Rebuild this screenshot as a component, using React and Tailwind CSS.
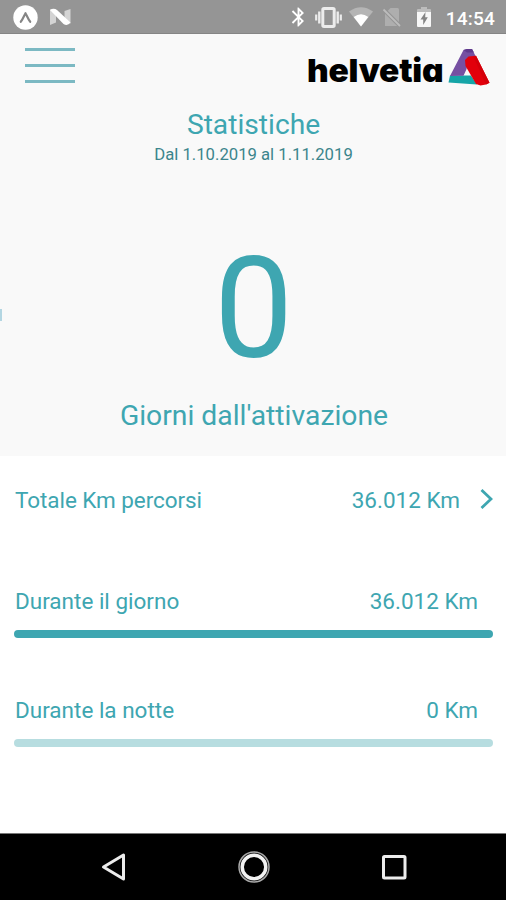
import { MdBluetooth } from 'react-icons/md';

// Rows under the counter. `value` is the distance, `progress` the filled share of the bar.
const TRIPS = [
  { label: 'Durante il giorno', value: '36.012 Km', progress: 100 },
  { label: 'Durante la notte', value: '0 Km', progress: 0 },
];

function StatusBar() {
  return (
    <div className="flex h-[34px] shrink-0 items-center justify-between border-b border-[#858585] bg-[#959595] pr-[11px] pl-[13px] text-white">
      <div className="flex items-center gap-3">
        <svg width="25" height="25" viewBox="0 0 25 25" className="mt-px">
          <circle cx="12.5" cy="12.5" r="12.2" fill="#fff" />
          <path d="M7.8 16.8 C9.6 14.6 11 11.2 12.5 8.2 C14 11.2 15.4 14.6 17.2 16.8" fill="none" stroke="#858585" strokeWidth="2.2" strokeLinejoin="round" strokeLinecap="round" />
        </svg>
        <svg width="21" height="18" viewBox="0 0 21 18">
          <path d="M0 1.500 H6 V14.500 L0 17 Z" fill="#d4d4d4" />
          <path d="M20.500 1 L14.500 3 V15 L20.500 15.500 Z" fill="#d4d4d4" />
          <path d="M0 2 Q3.500 -.5 7 2 L20.500 14.500 Q17.500 18.500 13.500 16 Z" fill="#fff" />
        </svg>
      </div>
      <div className="flex items-center">
        <MdBluetooth className="mt-px h-[24px] w-[23px]" />
        <svg width="27" height="21" viewBox="0 0 27 21" fill="none" stroke="#ececec" className="mt-px ml-[5px]">
          <rect x="7.800" y="1.500" width="11.400" height="18" rx="1.200" strokeWidth="3" />
          <path d="M4.300 4.500 V16.500 M22.700 4.500 V16.500" strokeWidth="2.400" />
          <path d="M1.200 7.500 V13.500 M25.800 7.500 V13.500" strokeWidth="2.200" />
        </svg>
        <svg width="24" height="20" viewBox="0 0 24 20" className="mt-px ml-[7px]">
          <path d="M0 4.500 Q12 -4 24 4.500 L12 19.500 Z" fill="#b5b5b5" />
          <path d="M4.700 10 Q12 4.500 19.300 10 L12 19.500 Z" fill="#fff" />
        </svg>
        <svg width="20" height="20" viewBox="0 0 20 20" className="mt-px ml-[9px]">
          <path d="M8.500 1 H15.500 Q17 1 17 2.500 V19 H3 V6.500 Z" fill="#aeaeae" />
          <path d="M1.500 2.500 L18 19" stroke="#959595" strokeWidth="4" />
          <path d="M1.500 2.500 L18 19" stroke="#bcbcbc" strokeWidth="1.800" />
        </svg>
        <svg width="14" height="20" viewBox="0 0 14 20" className="mt-px ml-[15px]">
          <path d="M0 5 V3 Q0 2 1 2 H4 V0 H10 V2 H13 Q14 2 14 3 V5 Z" fill="#bcbcbc" />
          <path d="M0 5 H14 V19 Q14 20 13 20 H1 Q0 20 0 19 Z" fill="#f7f7f7" />
          <path d="M8.500 5 L3.500 12.500 H6.200 V18 L10.800 10.300 H8.200 Z" fill="#858585" />
        </svg>
        <span className="mt-[3px] ml-[15px] text-[19px] leading-none font-medium tracking-[0.2px]">14:54</span>
      </div>
    </div>
  );
}

function Logo() {
  return (
    <div className="flex items-start">
      <span className="mt-[7px] ml-px w-[136px] origin-left scale-x-[1.045] font-[Inter,sans-serif] text-[32px] leading-[32px] font-black tracking-[-0.2px] whitespace-nowrap text-black [font-feature-settings:'cv11']">
        helvetia
      </span>
      <svg width="42" height="40" viewBox="0 0 42 40" className="ml-[5px]">
        <path d="M2 27.500 L.5 34.500 L29 36.500 L23 27.500 Z" fill="#16a5a7" />
        <path d="M2 28 L15.500 2 L19 1 H24 L28 9 L20 13 L18.500 21.300 L15.500 27.800 Z" fill="#7650a2" />
        <path d="M15.500 2 L19 1 H24 L26 4.500 H19 Z" fill="#5f3a8c" />
        <path d="M17 12 L20.500 8.500 L28 7.800 L41.500 34.800 L38 36.500 L32.500 37.500 L28 36 L17.500 18 Z" fill="#e2000b" />
        <path d="M28 7.800 L41.500 34.800 L38 36.500 L25.500 9 Z" fill="#d4000a" />
      </svg>
    </div>
  );
}

function Header() {
  return (
    <header className="flex h-[71px] items-start justify-between pr-4 pl-[25px]">
      <button aria-label="Menu" className="mt-[14px] flex flex-col gap-[13px]">
        <span className="h-[3px] w-[50px] bg-[#7cb9c3]" />
        <span className="h-[3px] w-[50px] bg-[#7cb9c3]" />
        <span className="h-[3px] w-[50px] bg-[#7cb9c3]" />
      </button>
      <div className="mt-[14px]">
        <Logo />
      </div>
    </header>
  );
}

function TripRow({ label, value, progress }) {
  return (
    <div className="h-[109px]">
      <div className="flex items-center justify-between pr-[15px] pl-px text-[22.5px] leading-7">
        <span>{label}</span>
        <span>{value}</span>
      </div>
      <div className="mt-[15px] h-2 overflow-hidden rounded-full bg-[#b7dde0]">
        <div className="h-full bg-[#3ea6b1]" style={{ width: `${progress}%` }} />
      </div>
    </div>
  );
}

function NavBar() {
  return (
    <nav className="flex h-[67px] shrink-0 items-center justify-between border-t border-[#777] bg-black pr-[99px] pl-[100px]">
      <svg width="26" height="30" viewBox="0 0 26 30" fill="none" stroke="#ececec" strokeWidth="3" strokeLinejoin="round">
        <path d="M23.500 3 V27 L3.500 15 Z" />
      </svg>
      <svg width="34" height="34" viewBox="0 0 34 34" fill="none">
        <circle cx="17" cy="17" r="15" stroke="#aaa" strokeWidth="1.500" />
        <circle cx="17" cy="17" r="11.800" stroke="#f2f2f2" strokeWidth="3.500" />
      </svg>
      <svg width="26" height="26" viewBox="0 0 26 26" fill="none" stroke="#ececec" strokeWidth="3">
        <rect x="2.500" y="2.500" width="21.500" height="21.500" rx="1" />
      </svg>
    </nav>
  );
}

export default function App() {
  return (
    <div className="flex h-[900px] w-[506px] flex-col overflow-hidden bg-white font-[Roboto,sans-serif] text-[#3ea6b1]">
      <StatusBar />

      <section className="h-[422px] shrink-0 bg-[#f9f9f9]">
        <Header />
        <div className="relative flex flex-col items-center">
          <h1 className="pl-px text-[28.2px] leading-10">Statistiche</h1>
          <p className="pl-px text-[16.7px] leading-5 text-[#3c858c]">Dal 1.10.2019 al 1.11.2019</p>
          {/* edge of the previous slide */}
          <span className="absolute top-[204px] left-0 h-3 w-[2px] bg-[#b3d6e2]" />
          <div className="mt-[61px] pl-px text-[141px] leading-[166px]">0</div>
          <p className="mt-[4px] pl-[2px] text-[28.3px] leading-10">Giorni dall'attivazione</p>
        </div>
      </section>

      <main className="flex-1 pr-[13px] pl-[14px]">
        <div className="flex h-[131px] items-start pt-[30px] text-[22.5px] leading-7">
          <span className="pl-px tracking-[-0.07px]">Totale Km percorsi</span>
          <span className="ml-auto">36.012 Km</span>
          <svg width="14" height="20" viewBox="0 0 14 20" fill="none" stroke="currentColor" strokeWidth="2.800" className="mt-[3px] ml-[19px]">
            <path d="M2.500 1 L12 10 L2.500 19" />
          </svg>
        </div>
        {TRIPS.map((trip) => (
          <TripRow key={trip.label} {...trip} />
        ))}
      </main>

      <NavBar />
    </div>
  );
}
